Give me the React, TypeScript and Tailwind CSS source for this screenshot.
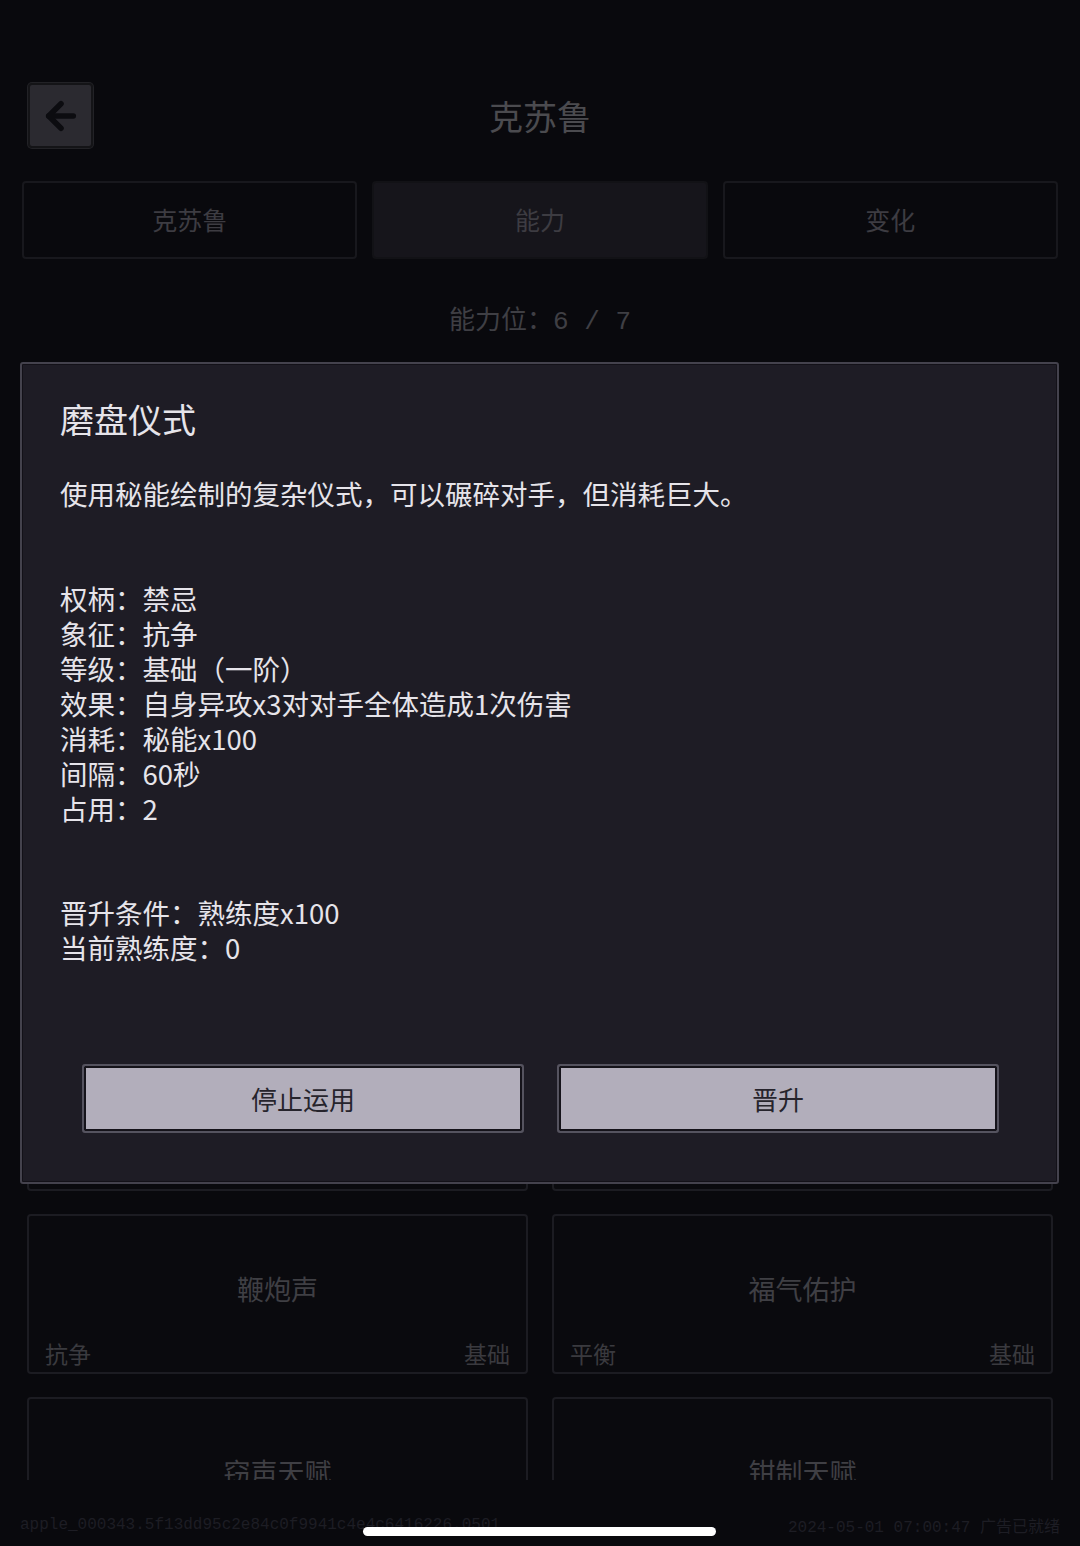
import React from "react";
import { ArrowLeft } from "lucide-react";

const cjk = { fontFamily: '"Noto Sans CJK SC", "Noto Sans", sans-serif' };
const mono = { fontFamily: '"Liberation Mono", "Noto Sans CJK SC", monospace' };

type Card = { name: string; sym: string; lvl: string };

const cards: Card[] = [
  { name: "烛火之眼", sym: "洞察", lvl: "基础" },
  { name: "低语回响", sym: "抗争", lvl: "基础" },
  { name: "秘能涌动", sym: "平衡", lvl: "基础" },
  { name: "磨盘仪式", sym: "抗争", lvl: "基础" },
  { name: "深渊凝视", sym: "禁忌", lvl: "基础" },
  { name: "古神庇佑", sym: "平衡", lvl: "基础" },
  { name: "迷雾行者", sym: "抗争", lvl: "基础" },
  { name: "梦境穿梭", sym: "平衡", lvl: "基础" },
  { name: "鞭炮声", sym: "抗争", lvl: "基础" },
  { name: "福气佑护", sym: "平衡", lvl: "基础" },
  { name: "窃声天赋", sym: "抗争", lvl: "基础" },
  { name: "钳制天赋", sym: "平衡", lvl: "基础" },
];

const stats = [
  "权柄：禁忌",
  "象征：抗争",
  "等级：基础（一阶）",
  "效果：自身异攻x3对对手全体造成1次伤害",
  "消耗：秘能x100",
  "间隔：60秒",
  "占用：2",
];

export default function App() {
  return (
    <div className="relative w-[1080px] h-[1546px] overflow-hidden bg-[#09090d]" style={cjk}>
      {/* Header */}
      <div className="pt-[83px] px-[28px] grid grid-cols-[65px_1fr_65px] items-center">
        <button className="w-[65px] h-[65px] rounded-[4px] bg-[#2b2a30] border-2 border-[#141417] ring-1 ring-[#222226] flex items-center justify-center">
          <ArrowLeft size={42} strokeWidth={3.2} color="#0c0c10" />
        </button>
        <div className="text-center text-[34px] leading-[40px] text-[#4b4b4f]">克苏鲁</div>
        <div />
      </div>

      {/* Tabs */}
      <div className="mt-[33px] px-[22px] grid grid-cols-3 gap-[15px]">
        {["克苏鲁", "能力", "变化"].map((t, i) => (
          <div
            key={t}
            className={
              i === 1
                ? "h-[78px] rounded-[4px] border-2 border-[#121216] bg-[#16151b] flex items-center justify-center text-[25px] text-[#3d3c42]"
                : "h-[78px] rounded-[4px] border-2 border-[#18181d] bg-[#09090d] flex items-center justify-center text-[25px] text-[#3d3c42]"
            }
          >
            {t}
          </div>
        ))}
      </div>

      {/* Slots */}
      <div className="mt-[41px] text-center text-[26px] leading-[36px] text-[#3f3f44]">
        能力位：<span style={mono}>6 / 7</span>
      </div>

      {/* List */}
      <div className="h-[1140px] overflow-hidden">
        <div className="pt-[142px] px-[27px] grid grid-cols-2 gap-x-[24px] gap-y-[23px]">
          {cards.map((c) => (
            <div
              key={c.name}
              className="h-[160px] rounded-[4px] border-2 border-[#1c1c22] bg-[#0a0a0e] flex flex-col"
            >
              <div className="pt-[54px] text-center text-[27px] leading-[38px] text-[#3f3f44]">{c.name}</div>
              <div className="mt-auto pb-[5px] px-[16px] flex justify-between text-[23px] leading-[28px] text-[#3a3a3f]">
                <span>{c.sym}</span>
                <span>{c.lvl}</span>
              </div>
            </div>
          ))}
        </div>
      </div>

      {/* Footer */}
      <div className="pt-[36px] px-[20px] flex justify-between text-[16px] leading-[18px] text-[#1d1d24]">
        <span style={mono}>apple_000343.5f13dd95c2e84c0f9941c4e4c6416226.0501</span>
        <span>
          <span style={mono}>2024-05-01 07:00:47 </span>广告已就绪
        </span>
      </div>

      {/* Home indicator */}
      <div className="absolute left-[363px] top-[1527px] w-[353px] h-[9px] rounded-full bg-white" />

      {/* Modal */}
      <div className="absolute left-[20px] top-[362px] w-[1039px] h-[822px] rounded-[3px] border-2 border-[#44424d] bg-[#131118] p-[1px]">
        <div className="h-full bg-[#1e1c25] flex flex-col text-[#e6e4ea]">
          <div className="pl-[37px] pt-[34px] text-[34px] leading-[40px]">磨盘仪式</div>
          <div className="pl-[37px] mt-[37px] text-[27.5px] leading-[34px]">
            使用秘能绘制的复杂仪式，可以碾碎对手，但消耗巨大。
          </div>
          <div className="pl-[37px] mt-[71px] text-[27.5px] leading-[35px]">
            {stats.map((s) => (
              <div key={s}>{s}</div>
            ))}
          </div>
          <div className="pl-[37px] mt-[69px] text-[27.5px] leading-[35px]">
            <div>晋升条件：熟练度x100</div>
            <div>当前熟练度：0</div>
          </div>
          <div className="mt-auto mb-[48px] pl-[59px] pr-[57px] grid grid-cols-2 gap-[33px]">
            {["停止运用", "晋升"].map((b) => (
              <button
                key={b}
                className="h-[69px] rounded-[3px] border-2 border-[#55535f] bg-[#b2aebb] shadow-[inset_0_0_0_2px_#15131a] text-[26px] text-[#26242c]"
                style={cjk}
              >
                {b}
              </button>
            ))}
          </div>
        </div>
      </div>
    </div>
  );
}
